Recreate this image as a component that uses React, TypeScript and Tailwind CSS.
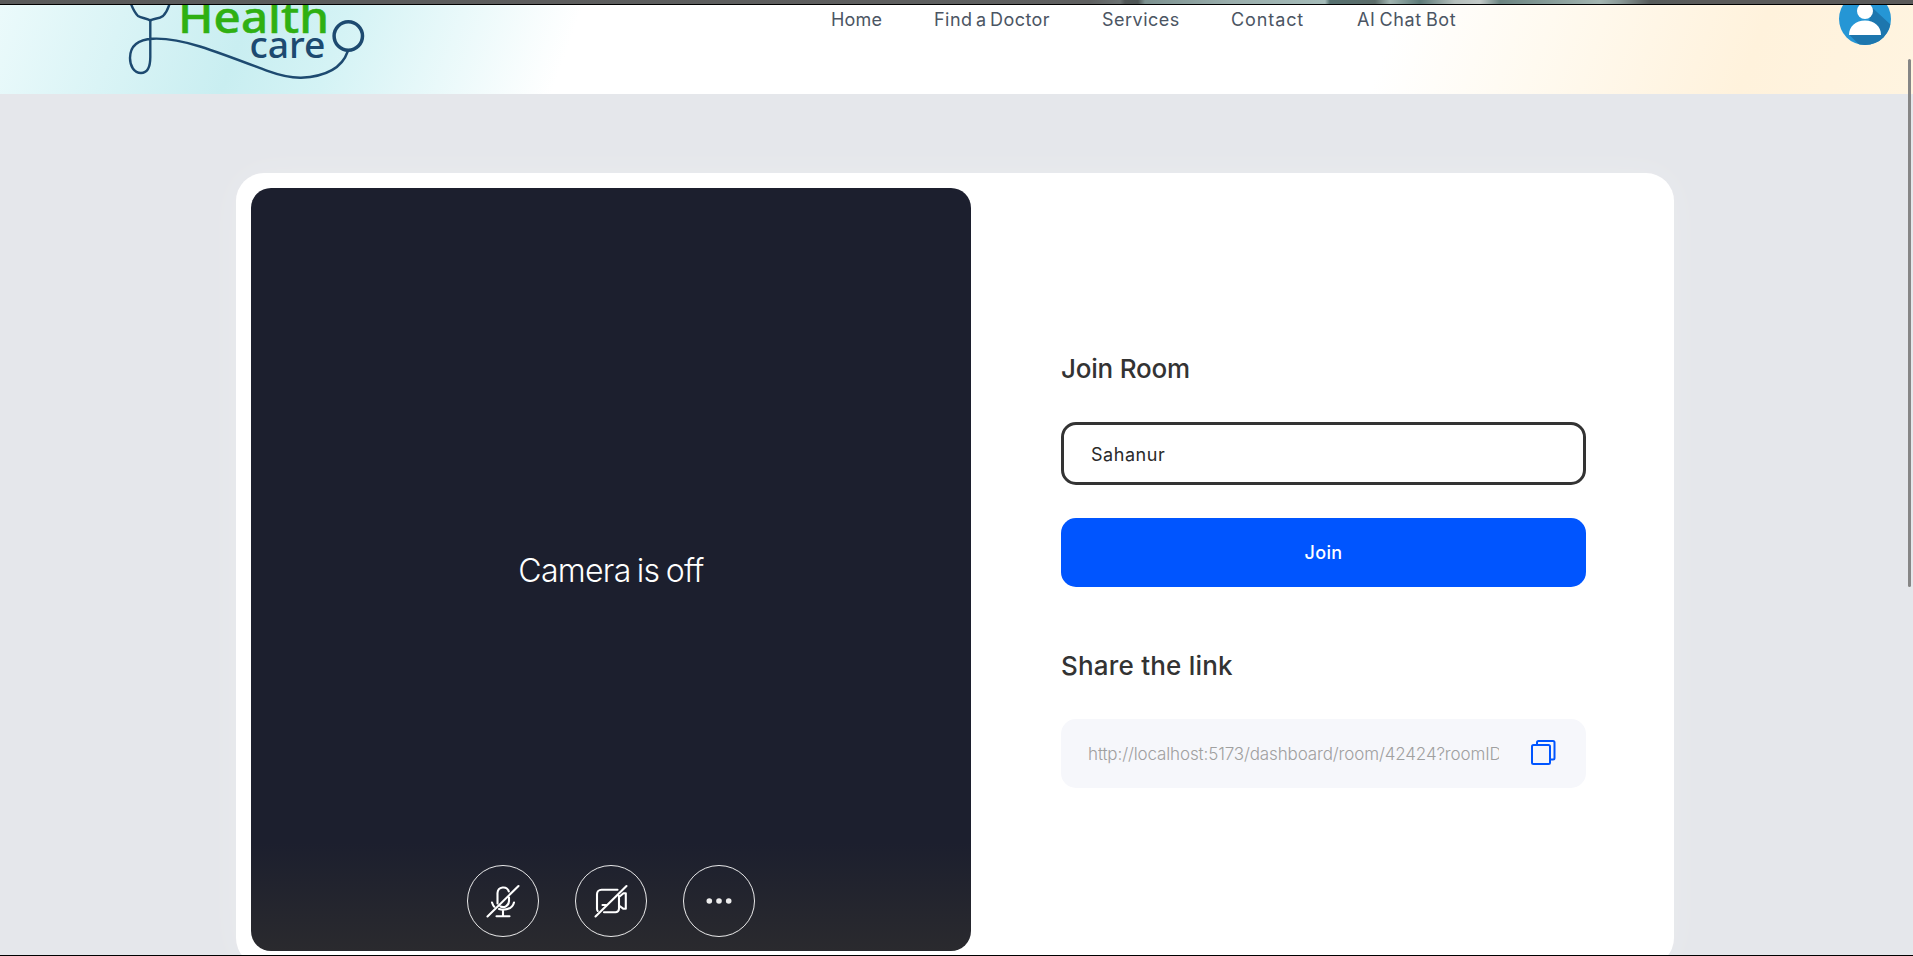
import React from "react";

const navItems = [
  { label: "Home", cls: "w-[50px] mr-[53px] tracking-[0.15px]" },
  { label: "Find a Doctor", cls: "w-[116px] mr-[52px] tracking-[0.45px] [word-spacing:-2px]" },
  { label: "Services", cls: "w-[77px] mr-[52px] tracking-[0.5px]" },
  { label: "Contact", cls: "w-[74px] mr-[52px] tracking-[0.9px]" },
  { label: "AI Chat Bot", cls: "w-[100px] tracking-[0.6px] [word-spacing:-1.5px]" },
];

function Logo() {
  return (
    <svg width="300" height="89" viewBox="100 5 300 89" className="ml-[100px] shrink-0" fill="none">
      <g stroke="#1d4a70" strokeWidth="2.4" strokeLinecap="round">
        <path d="M131 4C133 9 135 13 138 16C142 18.500 147 18 150.300 20.500C153 18.500 159 19 163 16C166 13 168 9 169.500 4" />
        <path d="M150.300 20V57C150.300 68 147 73 141 73C134 73 130 66 130 58C130 47 137 39.500 153 38.700C170 38 184 41.500 200 46.500C222 53.500 245 62.500 266.700 70.700C280 75.500 289 78 301 77.800C325 76.500 342 68 347.700 51.500" />
        <circle cx="348.300" cy="36" r="14.200" strokeWidth="3.500" />
      </g>
      <text x="178" y="33" fontFamily="'Noto Sans', sans-serif" fontSize="44" fontWeight="500" fill="#2fb012" stroke="#2fb012" strokeWidth="0.5" textLength="151" lengthAdjust="spacingAndGlyphs">Health</text>
      <text x="249.500" y="58" fontFamily="'Noto Sans', sans-serif" fontSize="35.500" fontWeight="500" fill="#1d4a70" textLength="76" lengthAdjust="spacingAndGlyphs">care</text>
    </svg>
  );
}

function Avatar() {
  return (
    <svg width="52" height="52" viewBox="0 0 52 52" className="mt-[-12px] mr-[22px] shrink-0">
      <defs>
        <clipPath id="avatar-disc"><circle cx="26" cy="26" r="26" /></clipPath>
      </defs>
      <g clipPath="url(#avatar-disc)">
        <rect width="52" height="52" fill="#2596d5" />
        <path d="M32 13.500 52 32V52H20.500L10.500 42 30 32z" fill="#1d76ae" />
      </g>
      <circle cx="26" cy="18" r="8" fill="#fff" />
      <path d="M10 42c0-9 7-14.500 16-14.500S42 33 42 42z" fill="#fff" />
    </svg>
  );
}

function RoundButton({ label, children }: { label: string; children: React.ReactNode }) {
  return (
    <button aria-label={label} className="flex size-[72px] items-center justify-center rounded-full border border-white/90 text-white">
      <svg width="36" height="36" viewBox="0 0 36 36" fill="none" stroke="currentColor" strokeWidth="2.1" strokeLinecap="round" strokeLinejoin="round">
        {children}
      </svg>
    </button>
  );
}

export default function App() {
  return (
    <div className="relative flex h-[956px] w-full flex-col overflow-hidden bg-[#e5e7eb] font-[Inter,sans-serif]">
      <div className="h-1 shrink-0 bg-[linear-gradient(90deg,#5a5a5a_0,#5f6060_1090px,#6c7272_1120px,#505656_1125px,#4e5555_1138px,#7d9290_1145px,#9aaeac_1230px,#a5bcb9_1325px,#55706f_1330px,#5b6c69_1375px,#a0b4b0_1390px,#5d7a78_1420px,#b5bfbc_1455px,#c3cac8_1480px,#6b8481_1500px,#a3b5b1_1600px,#8a9997_1620px,#565b5b_1650px,#5a5a5a_1700px)]" />
      <div className="h-px shrink-0 bg-black" />
      <header className="flex h-[89px] shrink-0 items-start overflow-hidden bg-[linear-gradient(110deg,#ebfafb_0,#c9eef1_13%,#d4f3f5_18%,#fff_30%,#fff_72%,#fffaf0_80%,#fff2dc_91%,#fff4e0_100%)]">
        <Logo />
        <nav className="ml-[431px] flex pt-[1px] text-[18px] leading-[27px] font-normal text-[#4b5563]">
          {navItems.map((item) => (
            <a key={item.label} className={`shrink-0 whitespace-nowrap ${item.cls}`}>{item.label}</a>
          ))}
        </nav>
        <div className="grow" />
        <Avatar />
      </header>

      <main className="ml-[236px] mt-[79px] flex h-[793px] w-[1438px] shrink-0 rounded-[28px] bg-white p-[15px] shadow-[0_0_40px_rgba(255,255,255,0.2)]">
        <section className="flex w-[720px] flex-col rounded-[20px] bg-[linear-gradient(180deg,#1c1f2e_0,#1c1f2e_655px,#2a2a2e_763px)]">
          <div className="flex h-[677px] items-end justify-center pb-[270px] text-[32px] leading-[48px] font-light text-white">
            <span className="tracking-[-0.7px] [word-spacing:-2px]">Camera is off</span>
          </div>
          <div className="flex justify-center gap-9">
            <RoundButton label="Microphone">
              <path d="M12.500 20.500V10a5.800 5.800 0 0 1 11.300-1.500M24 14.500V18a6 6 0 0 1-8.500 5.500M7 19.500c.5 1.500 1 3 2.300 4.200M29 19.500c-1.200 4.800-5.500 7.200-11 7.200q-2 0-4-.700M18 27v6M11.500 33.300h13M2.500 33.500 33.500 3" />
            </RoundButton>
            <RoundButton label="Camera">
              <path d="M24.500 6.700H8.500a4.500 4.500 0 0 0-4.500 4.500V26q0 1 .7 2M11 29.200h11.500a3.500 3.500 0 0 0 3.500-3.500V13M26 14l4.500-3.700h2.300v15.500h-2.300L26 22.500M9.500 22h3.500M2.500 33.500 33.500 3" />
            </RoundButton>
            <RoundButton label="More">
              <g fill="#ececec" stroke="none"><circle cx="8.300" cy="18" r="2.800" /><circle cx="18" cy="18" r="2.800" /><circle cx="27.700" cy="18" r="2.800" /></g>
            </RoundButton>
          </div>
        </section>

        <section className="ml-[90px] flex w-[525px] flex-col pt-[164px]">
          <h2 className="h-[70px] text-[26px] leading-[34px] font-medium tracking-[-0.2px] text-[#333]">Join Room</h2>
          <div className="flex h-[63px] items-center rounded-[15px] border-[3px] border-[#333] pt-px pl-[27px] text-[18px] tracking-[0.55px] text-[#2a2a2a]">Sahanur</div>
          <button className="mt-[33px] h-[69px] rounded-[15px] bg-[#0055ff] text-[18px] font-medium tracking-[0.4px] text-white">Join</button>
          <h2 className="mt-[62px] h-[70px] text-[26px] leading-[34px] font-medium tracking-[0.2px] text-[#333]">Share the link</h2>
          <div className="flex h-[69px] items-center rounded-[15px] bg-[#f6f7fb] pl-[27px] text-[#a0a0a0]">
            <div className="w-[411px] overflow-hidden pt-0.5 text-[17px] font-light tracking-[-0.13px] whitespace-nowrap">http://localhost:5173/dashboard/room/42424?roomID=42424</div>
            <svg width="26" height="26" viewBox="0 0 26 26" className="mb-[3px] ml-[31px]" fill="none" stroke="#0055ff" strokeWidth="2" strokeLinejoin="round">
              <path d="M7 6V3.500Q7 2 8.500 2H23q1.500 0 1.500 1.500V19q0 1.500-1.500 1.500h-3" />
              <rect x="2" y="6" width="18" height="19" rx="1.500" />
            </svg>
          </div>
        </section>
      </main>
      <div className="absolute top-[59px] right-[2px] h-[528px] w-[3px] rounded-full bg-[#868686]" />
      <div className="absolute bottom-0 left-0 h-px w-full bg-black" />
    </div>
  );
}
